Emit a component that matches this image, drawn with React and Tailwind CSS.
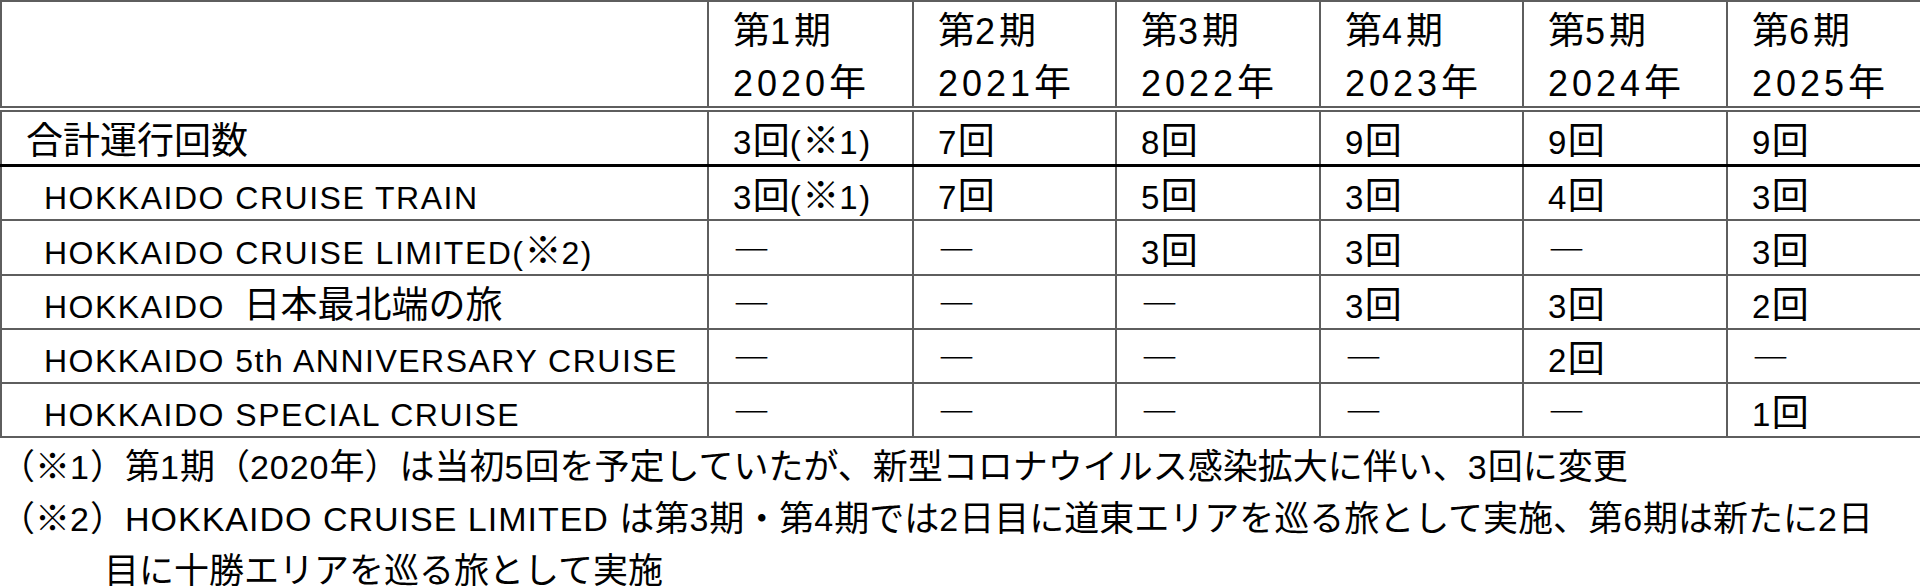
import React from "react";

const LAT_T = "font-['Liberation_Sans',sans-serif] text-[32px] tracking-[1.5px] leading-none";
const LAT_D = "font-['Liberation_Sans',sans-serif] text-[33px] tracking-[1.5px] leading-none";
const LAT_H = "font-['Liberation_Sans',sans-serif] text-[36px] tracking-[4px] leading-none";
const LAT_F = "font-['Liberation_Sans',sans-serif] text-[34px] tracking-[1px] leading-none";

function Run({ text, latin }) {
  return text.split(/([\x20-\x7E]+)/).map((s, i) =>
    /^[\x20-\x7E]+$/.test(s) ? (
      <span key={i} className={latin}>
        {s}
      </span>
    ) : (
      <React.Fragment key={i}>{s}</React.Fragment>
    )
  );
}

const headers = [
  ["第1期", "2020年"],
  ["第2期", "2021年"],
  ["第3期", "2022年"],
  ["第4期", "2023年"],
  ["第5期", "2024年"],
  ["第6期", "2025年"],
];

const D = "―";

const rows = [
  ["HOKKAIDO CRUISE TRAIN", "3回(※1)", "7回", "5回", "3回", "4回", "3回"],
  ["HOKKAIDO CRUISE LIMITED(※2)", D, D, "3回", "3回", D, "3回"],
  ["HOKKAIDO\u2002日本最北端の旅", D, D, D, "3回", "3回", "2回"],
  ["HOKKAIDO 5th ANNIVERSARY CRUISE", D, D, D, D, "2回", D],
  ["HOKKAIDO SPECIAL CRUISE", D, D, D, D, D, "1回"],
];
const rowH = ["h-[55px]", "h-[55px]", "h-[54px]", "h-[54px]", "h-[54px]"];

const total = ["合計運行回数", "3回(※1)", "7回", "8回", "9回", "9回", "9回"];

const cell = "border-2 border-[#5e5e5e] p-0 pl-[24px] align-middle whitespace-nowrap";

export default function App() {
  return (
    <div className="w-[1920px] h-[586px] bg-white text-black overflow-hidden font-['Noto_Sans_CJK_JP',sans-serif]">
      <table className="table-fixed border-collapse w-[1920px] text-[37px] leading-[44px]">
        <colgroup>
          <col className="w-[707px]" />
          <col className="w-[205px]" />
          <col className="w-[203px]" />
          <col className="w-[204px]" />
          <col className="w-[203px]" />
          <col className="w-[204px]" />
          <col className="w-[194px]" />
        </colgroup>
        <thead>
          <tr className="h-[108px]">
            <th className="border-2 border-[#5e5e5e] border-b-[6px] border-double border-b-[#5e5e5e] p-0"></th>
            {headers.map((h, i) => (
              <th
                key={i}
                className="border-2 border-[#5e5e5e] border-b-[6px] border-double border-b-[#5e5e5e] p-0 pl-[24px] text-left font-normal align-middle whitespace-nowrap leading-[52px]"
              >
                <div>
                  <Run text={h[0]} latin={LAT_H} />
                </div>
                <div>
                  <Run text={h[1]} latin={LAT_H} />
                </div>
              </th>
            ))}
          </tr>
        </thead>
        <tbody>
          <tr className="h-[56px]">
            {total.map((t, i) => (
              <td key={i} className={cell + " border-b-[3px] border-b-black"}>
                <Run text={t} latin={LAT_D} />
              </td>
            ))}
          </tr>
          {rows.map((r, ri) => (
            <tr key={ri} className={rowH[ri]}>
              {r.map((t, i) => (
                <td key={i} className={i === 0 ? cell + " pl-[42px]" : cell}>
                  <Run text={t} latin={i === 0 ? LAT_T : LAT_D} />
                </td>
              ))}
            </tr>
          ))}
        </tbody>
      </table>
      <div className="text-[35px] leading-[52px] whitespace-nowrap">
        <div>
          <Run
            text="（※1）第1期（2020年）は当初5回を予定していたが、新型コロナウイルス感染拡大に伴い、3回に変更"
            latin={LAT_F}
          />
        </div>
        <div>
          <Run
            text="（※2）HOKKAIDO CRUISE LIMITED は第3期・第4期では2日目に道東エリアを巡る旅として実施、第6期は新たに2日"
            latin={LAT_F}
          />
        </div>
        <div className="pl-[104px] mt-[4px] leading-[44px]">
          <Run text="目に十勝エリアを巡る旅として実施" latin={LAT_F} />
        </div>
      </div>
    </div>
  );
}
